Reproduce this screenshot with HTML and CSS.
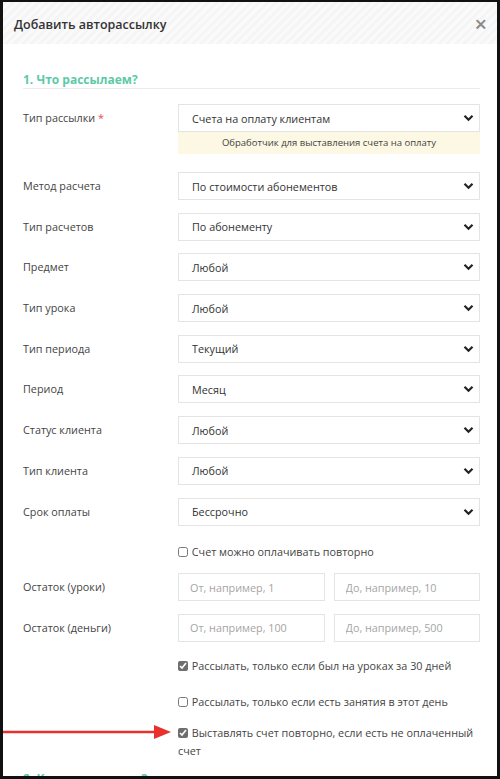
FILE: index.html
```html
<!DOCTYPE html>
<html lang="ru">
<head>
  <meta charset="UTF-8" />
  <meta name="viewport" content="width=device-width, initial-scale=1.0"/>
  <title>Добавить авторассылку</title>
  <link rel="stylesheet" href="styles.css">
</head>
<body>
  <div class="modal">
    <header class="modal-head">
      <h1>Добавить авторассылку</h1>
      <span class="close">&times;</span>
    </header>

    <div class="modal-body">
      <h2 class="section-title">1. Что рассылаем?</h2>

      <!-- Type -->
      <div class="row row-first">
        <label>Тип рассылки <span class="req">*</span></label>
        <div>
          <div class="select">
            <span>Счета на оплату клиентам</span>
            <svg width="11" height="8" viewBox="0 0 11 8"><path d="M1.5 1.8 5.5 5.8 9.5 1.8" fill="none" stroke="#222" stroke-width="2.2"/></svg>
          </div>
          <div class="note">Обработчик для выставления счета на оплату</div>
        </div>
      </div>

      <div class="row">
        <label>Метод расчета</label>
        <div class="select"><span>По стоимости абонементов</span><svg width="11" height="8" viewBox="0 0 11 8"><path d="M1.5 1.8 5.5 5.8 9.5 1.8" fill="none" stroke="#222" stroke-width="2.2"/></svg></div>
      </div>
      <div class="row">
        <label>Тип расчетов</label>
        <div class="select"><span>По абонементу</span><svg width="11" height="8" viewBox="0 0 11 8"><path d="M1.5 1.8 5.5 5.8 9.5 1.8" fill="none" stroke="#222" stroke-width="2.2"/></svg></div>
      </div>
      <div class="row">
        <label>Предмет</label>
        <div class="select"><span>Любой</span><svg width="11" height="8" viewBox="0 0 11 8"><path d="M1.5 1.8 5.5 5.8 9.5 1.8" fill="none" stroke="#222" stroke-width="2.2"/></svg></div>
      </div>
      <div class="row">
        <label>Тип урока</label>
        <div class="select"><span>Любой</span><svg width="11" height="8" viewBox="0 0 11 8"><path d="M1.5 1.8 5.5 5.8 9.5 1.8" fill="none" stroke="#222" stroke-width="2.2"/></svg></div>
      </div>
      <div class="row">
        <label>Тип периода</label>
        <div class="select"><span>Текущий</span><svg width="11" height="8" viewBox="0 0 11 8"><path d="M1.5 1.8 5.5 5.8 9.5 1.8" fill="none" stroke="#222" stroke-width="2.2"/></svg></div>
      </div>
      <div class="row">
        <label>Период</label>
        <div class="select"><span>Месяц</span><svg width="11" height="8" viewBox="0 0 11 8"><path d="M1.5 1.8 5.5 5.8 9.5 1.8" fill="none" stroke="#222" stroke-width="2.2"/></svg></div>
      </div>
      <div class="row">
        <label>Статус клиента</label>
        <div class="select"><span>Любой</span><svg width="11" height="8" viewBox="0 0 11 8"><path d="M1.5 1.8 5.5 5.8 9.5 1.8" fill="none" stroke="#222" stroke-width="2.2"/></svg></div>
      </div>
      <div class="row">
        <label>Тип клиента</label>
        <div class="select"><span>Любой</span><svg width="11" height="8" viewBox="0 0 11 8"><path d="M1.5 1.8 5.5 5.8 9.5 1.8" fill="none" stroke="#222" stroke-width="2.2"/></svg></div>
      </div>
      <div class="row">
        <label>Срок оплаты</label>
        <div class="select"><span>Бессрочно</span><svg width="11" height="8" viewBox="0 0 11 8"><path d="M1.5 1.8 5.5 5.8 9.5 1.8" fill="none" stroke="#222" stroke-width="2.2"/></svg></div>
      </div>

      <div class="row row-check check-repeat">
        <span></span>
        <label class="check"><input type="checkbox"> Счет можно оплачивать повторно</label>
      </div>

      <div class="row">
        <label>Остаток (уроки)</label>
        <div class="pair">
          <input type="text" placeholder="От, например, 1">
          <input type="text" placeholder="До, например, 10">
        </div>
      </div>
      <div class="row">
        <label>Остаток (деньги)</label>
        <div class="pair">
          <input type="text" placeholder="От, например, 100">
          <input type="text" placeholder="До, например, 500">
        </div>
      </div>

      <div class="row row-check check-visits">
        <span></span>
        <label class="check"><input type="checkbox" checked> Рассылать, только если был на уроках за 30 дней</label>
      </div>
      <div class="row row-check">
        <span></span>
        <label class="check"><input type="checkbox"> Рассылать, только если есть занятия в этот день</label>
      </div>
      <div class="row row-check">
        <span></span>
        <label class="check"><input type="checkbox" checked> Выставлять счет повторно, если есть не оплаченный счет</label>
      </div>

      <h2 class="section-title section-next">2. Кому рассылаем?</h2>
    </div>

    <!-- annotation arrow -->
    <svg class="arrow" width="172" height="16" viewBox="0 0 172 16">
      <line x1="0" y1="8" x2="158" y2="8" stroke="#e8312f" stroke-width="2.4"/>
      <path d="M154 1 171 8 154 15Z" fill="#e8312f"/>
    </svg>
  </div>
</body>
</html>
```

FILE: styles.css
```css
* {
  box-sizing: border-box;
  margin: 0;
  padding: 0;
}
body {
  font-family: 'Open Sans', 'Liberation Sans', sans-serif;
  background: #fff;
  color: #444;
  font-size: 10.8px;
}
.modal {
  position: relative;
  height: 779px;
  border: 3px solid #111;
  border-top-width: 2px;
  overflow: hidden;
  background: #fff;
}
.modal-head {
  display: flex;
  justify-content: space-between;
  align-items: center;
  height: 42px;
  padding: 3px 10px 0 11px;
  background: repeating-linear-gradient(135deg, #f5f5f5 0 3px, #fafafa 3px 6px);
}
.modal-head h1 {
  font-size: 12.5px;
  font-weight: 600;
  color: #333;
}
.close {
  font-size: 22px;
  line-height: 1;
  margin-top: -3px;
  color: #8a8a8a;
  font-weight: 600;
}
.modal-body {
  padding: 0 17px 0 20px;
}
.section-title {
  font-size: 12px;
  line-height: 16px;
  font-weight: 700;
  color: #5ec9a8;
  padding-top: 28px;
  border-bottom: 1px solid #ececec;
  margin-bottom: 15px;
}
.row {
  display: grid;
  grid-template-columns: 155px minmax(0, 1fr);
  margin-bottom: 12.7px;
}
.row > label {
  padding-top: 6px;
  color: #444;
}
.row-first {
  margin-bottom: 18px;
}
.req {
  color: #e64b4b;
}
.select {
  display: flex;
  justify-content: space-between;
  align-items: center;
  height: 28px;
  padding: 0 5px 0 13px;
  border: 1px solid #e4e4e4;
  color: #333;
  background: #fff;
}
.note {
  height: 22px;
  line-height: 22px;
  text-align: center;
  background: #fcf8e3;
  color: #444;
  font-size: 9.5px;
}
.pair {
  display: flex;
  gap: 9px;
}
.pair input {
  flex: 1;
  min-width: 0;
  width: 0;
  height: 28px;
  padding: 0 11px;
  border: 1px solid #e4e4e4;
  font-family: inherit;
  font-size: 10.8px;
  color: #333;
}
.pair input::placeholder {
  color: #a5a5a5;
}
.row-check {
  padding-top: 2px;
  margin-bottom: 11px;
}
.check-repeat {
  padding-top: 5px;
  margin-bottom: 12px;
}
.check-visits {
  margin-bottom: 16px;
}
.row > .check {
  display: block;
  padding-top: 0;
  line-height: 18px;
  color: #444;
}
.check input {
  width: 10px;
  height: 10px;
  margin: 0 1px 0 0;
  vertical-align: -1px;
  accent-color: #6e6e6e;
}
.section-next {
  padding-top: 0;
}
.arrow {
  position: absolute;
  left: -3px;
  top: 722px;
}
```
